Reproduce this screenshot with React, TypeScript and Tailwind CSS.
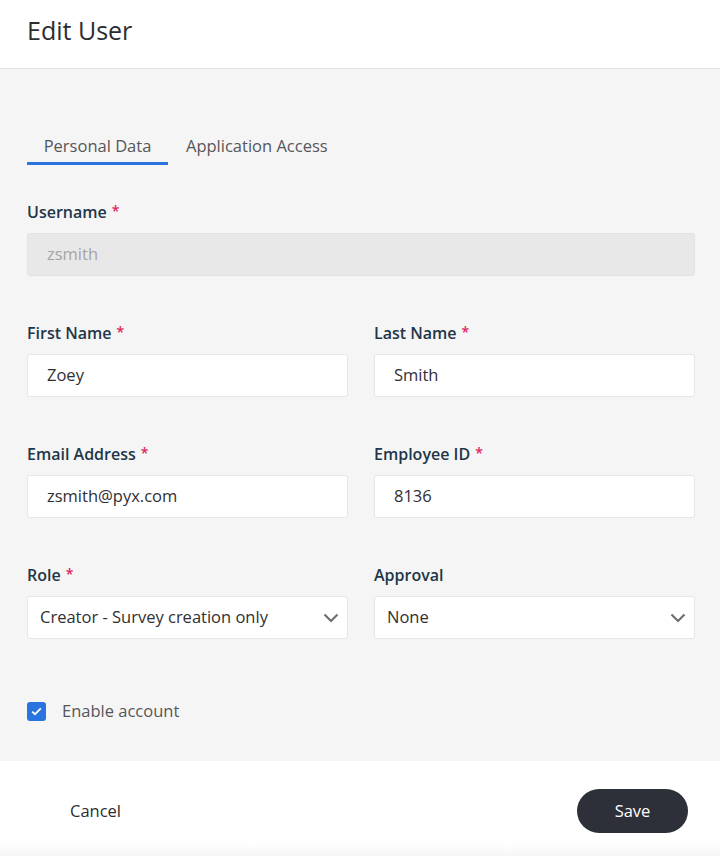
import React from "react";

const Label = ({ text, req }: { text: string; req?: boolean }) => (
  <div className="h-[20px] flex items-center text-[16px] font-semibold text-[#223648] leading-none">
    {text}
    {req && <span className="ml-[5px] text-[#e0245e] text-[14px] relative -top-[1px]">*</span>}
  </div>
);

const Input = ({ value, disabled }: { value: string; disabled?: boolean }) => (
  <div
    className={`h-[43px] mt-[11px] rounded-[3px] border flex items-center px-[19px] text-[16.5px] ${
      disabled ? "bg-[#e8e8e8] border-[#e2e2e2] text-[#a5a5a5]" : "bg-white border-[#e6e6e6] text-[#2f2f33]"
    }`}
  >
    {value}
  </div>
);

const Select = ({ value }: { value: string }) => (
  <div className="h-[43px] mt-[11px] rounded-[3px] border border-[#e6e6e6] bg-white flex items-center justify-between pl-[12px] pr-[8px] text-[16.5px] text-[#2f2f33]">
    <span>{value}</span>
    <svg width="16" height="10" viewBox="0 0 16 10" fill="none">
      <path d="M1.5 1.5 L8 8 L14.5 1.5" stroke="#6f6f6f" strokeWidth="2.2" />
    </svg>
  </div>
);

export default function App() {
  return (
    <div className="w-[720px] h-[856px] bg-white flex flex-col" style={{ fontFamily: "'Open Sans', Lato, sans-serif" }}>
      <div className="h-[69px] shrink-0 bg-white border-b border-[#dfe0e3] flex items-center px-[27px]">
        <h1 className="text-[25px] text-[#2b2d31] -mt-[6px]">Edit User</h1>
      </div>
      <div className="flex-1 bg-[#f5f5f5] pl-[27px] pr-[25px] pt-[65px]">
        <div className="flex items-end">
          <div className="w-[141px] h-[31px] flex flex-col items-center">
            <span className="text-[16.5px] text-[#55565a] leading-[22px] mt-[1px]">Personal Data</span>
            <div className="mt-auto h-[3px] w-full bg-[#2a74e0]" />
          </div>
          <div className="ml-[18px] h-[31px]">
            <span className="text-[16.5px] text-[#55565a] leading-[22px]">Application Access</span>
          </div>
        </div>
        <div className="mt-[37px]">
          <Label text="Username" req />
          <Input value="zsmith" disabled />
        </div>
        <div className="mt-[47px] grid grid-cols-2 gap-x-[26px] gap-y-[47px]">
          <div>
            <Label text="First Name" req />
            <Input value="Zoey" />
          </div>
          <div>
            <Label text="Last Name" req />
            <Input value="Smith" />
          </div>
          <div>
            <Label text="Email Address" req />
            <Input value="zsmith@pyx.com" />
          </div>
          <div>
            <Label text="Employee ID" req />
            <Input value="8136" />
          </div>
          <div>
            <Label text="Role" req />
            <Select value="Creator - Survey creation only" />
          </div>
          <div>
            <Label text="Approval" />
            <Select value="None" />
          </div>
        </div>
        <div className="mt-[61px] flex items-center">
          <div className="w-[19px] h-[19px] rounded-[3px] bg-[#2a74e0] flex items-center justify-center">
            <svg width="11" height="9" viewBox="0 0 11 9" fill="none">
              <path d="M1.2 4.6 L4 7.2 L9.8 1.4" stroke="white" strokeWidth="1.8" />
            </svg>
          </div>
          <span className="ml-[16px] text-[16.5px] text-[#55565a] -mt-[1px]">Enable account</span>
        </div>
      </div>
      <div className="h-[95px] shrink-0 bg-gradient-to-b from-white from-[85%] to-[#f6f6f6] flex items-start justify-between pl-[70px] pr-[32px] pt-[28px]">
        <span className="text-[16.5px] text-[#2b2d31] mt-[10px]">Cancel</span>
        <button className="w-[111px] h-[44px] rounded-full bg-[#2d3038] text-white text-[16.5px]">Save</button>
      </div>
    </div>
  );
}
